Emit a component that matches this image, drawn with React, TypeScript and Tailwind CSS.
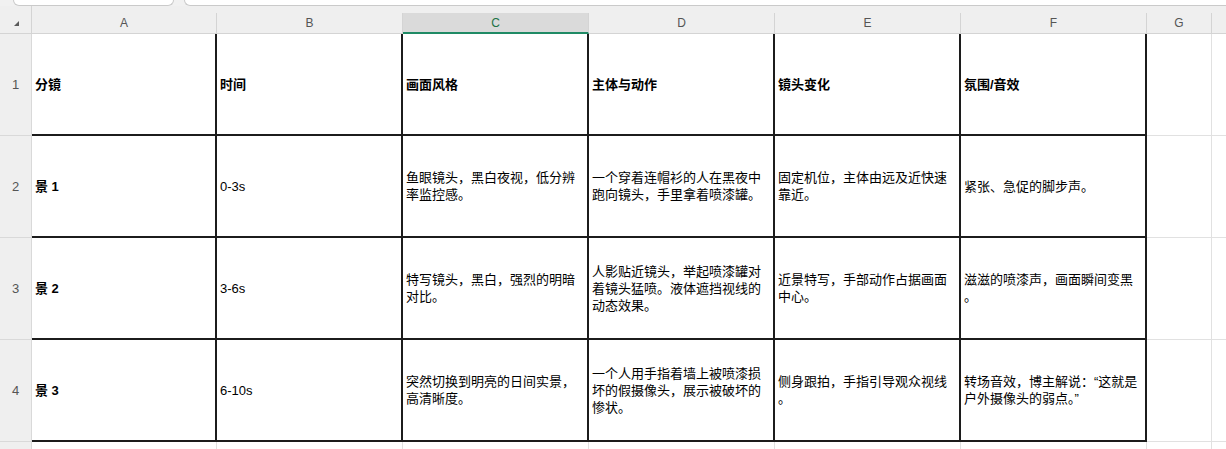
type Cell = { lines: string[]; bold?: boolean };

const columns = ["A", "B", "C", "D", "E", "F"];
const selectedColumn = "C";

const rows: Cell[][] = [
  [
    { lines: ["分镜"], bold: true },
    { lines: ["时间"], bold: true },
    { lines: ["画面风格"], bold: true },
    { lines: ["主体与动作"], bold: true },
    { lines: ["镜头变化"], bold: true },
    { lines: ["氛围/音效"], bold: true },
  ],
  [
    { lines: ["景 1"], bold: true },
    { lines: ["0-3s"] },
    { lines: ["鱼眼镜头，黑白夜视，低分辨", "率监控感。"] },
    { lines: ["一个穿着连帽衫的人在黑夜中", "跑向镜头，手里拿着喷漆罐。"] },
    { lines: ["固定机位，主体由远及近快速", "靠近。"] },
    { lines: ["紧张、急促的脚步声。"] },
  ],
  [
    { lines: ["景 2"], bold: true },
    { lines: ["3-6s"] },
    { lines: ["特写镜头，黑白，强烈的明暗", "对比。"] },
    { lines: ["人影贴近镜头，举起喷漆罐对", "着镜头猛喷。液体遮挡视线的", "动态效果。"] },
    { lines: ["近景特写，手部动作占据画面", "中心。"] },
    { lines: ["滋滋的喷漆声，画面瞬间变黑", "。"] },
  ],
  [
    { lines: ["景 3"], bold: true },
    { lines: ["6-10s"] },
    { lines: ["突然切换到明亮的日间实景，", "高清晰度。"] },
    { lines: ["一个人用手指着墙上被喷漆损", "坏的假摄像头，展示被破坏的", "惨状。"] },
    { lines: ["侧身跟拍，手指引导观众视线", "。"] },
    { lines: ["转场音效，博主解说：“这就是", "户外摄像头的弱点。”"] },
  ],
];

const colWidth = (i: number) => (i === 0 ? "w-[185px]" : "w-[186px]");

function ColumnHeader({ label, index }: { label: string; index: number }) {
  const selected = label === selectedColumn;
  return (
    <div className={`${colWidth(index)} shrink-0 flex flex-col`}>
      <div className="h-[7px]" />
      <div
        className={
          selected
            ? "flex-1 flex items-center justify-center bg-[#dadada] border-r border-[#d4d4d4] border-b-2 border-b-[#1f8a65] text-[#217346]"
            : "flex-1 flex items-center justify-center border-r border-[#d4d4d4] border-b border-b-[#d4d4d4] text-[#555]"
        }
      >
        {label}
      </div>
    </div>
  );
}

function DataCell({ cell, index }: { cell: Cell; index: number }) {
  return (
    <div
      className={`${colWidth(index)} shrink-0 h-full bg-white border-r-2 border-b-2 border-[#1c1c1c] flex flex-col justify-center pl-[3px] text-[13px] leading-[17px] text-black ${
        cell.bold ? "font-bold" : ""
      }`}
    >
      {cell.lines.map((line, i) => (
        <div key={i} className="whitespace-nowrap">
          {line}
        </div>
      ))}
    </div>
  );
}

function RowHeader({ n }: { n: number }) {
  return (
    <div className="w-[32px] shrink-0 h-full bg-[#efefef] border-r border-b border-[#d9d9d9] flex items-center justify-center text-[13px] text-[#555]">
      {n}
    </div>
  );
}

function EmptyTail() {
  return (
    <>
      <div className="w-[65px] shrink-0 h-full bg-white border-r border-b border-[#e1e1e1]" />
      <div className="flex-1 h-full bg-white border-b border-[#e1e1e1]" />
    </>
  );
}

export default function App() {
  return (
    <div
      className="w-[1226px] h-[449px] overflow-hidden bg-white select-none"
      style={{ fontFamily: '"Liberation Sans", "Noto Sans CJK SC", sans-serif' }}
    >
      {/* bottom edge of the name box and formula bar */}
      <div className="h-[6px] bg-[#f1f1f1] flex pl-[13px] gap-[10px]">
        <div className="w-[161px] h-[6px] bg-white border-x border-b border-[#cacaca] rounded-b-[6px]" />
        <div className="flex-1 h-[6px] bg-white border-l border-b border-[#cacaca] rounded-bl-[6px]" />
      </div>

      {/* column letters */}
      <div className="h-[28px] flex bg-[#efefef] text-[12px]">
        <div className="w-[32px] shrink-0 border-r border-b border-[#d4d4d4] pt-[15px] pl-[14px]">
          <div className="w-0 h-0 border-l-[5px] border-l-transparent border-b-[5px] border-b-[#5a5a5a]" />
        </div>
        {columns.map((c, i) => (
          <ColumnHeader key={c} label={c} index={i} />
        ))}
        <div className="w-[65px] shrink-0 flex flex-col">
          <div className="h-[7px]" />
          <div className="flex-1 flex items-center justify-center border-r border-b border-[#d4d4d4] text-[#555]">
            G
          </div>
        </div>
        <div className="flex-1 flex flex-col">
          <div className="h-[7px]" />
          <div className="flex-1 border-b border-[#d4d4d4]" />
        </div>
      </div>

      {rows.map((row, r) => (
        <div key={r} className="h-[102px] flex">
          <RowHeader n={r + 1} />
          {row.map((cell, i) => (
            <DataCell key={i} cell={cell} index={i} />
          ))}
          <EmptyTail />
        </div>
      ))}

      <div className="h-[102px] flex">
        <div className="w-[32px] shrink-0 h-full bg-[#efefef] border-r border-[#d9d9d9] flex items-start justify-center pt-[2px] text-[13px] text-[#555]">
          5
        </div>
        {columns.map((c, i) => (
          <div key={c} className={`${colWidth(i)} shrink-0 h-full bg-white border-r border-[#e1e1e1]`} />
        ))}
        <div className="w-[65px] shrink-0 h-full bg-white border-r border-[#e1e1e1]" />
      </div>
    </div>
  );
}
